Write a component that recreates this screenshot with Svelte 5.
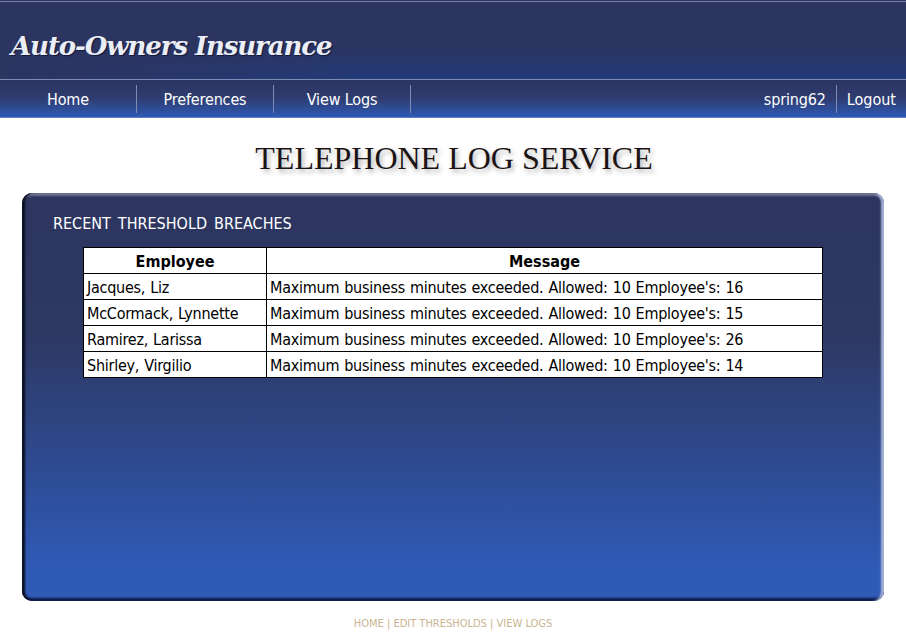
<script>
  const breaches = [
    { employee: 'Jacques, Liz', allowed: 10, actual: 16 },
    { employee: 'McCormack, Lynnette', allowed: 10, actual: 15 },
    { employee: 'Ramirez, Larissa', allowed: 10, actual: 26 },
    { employee: 'Shirley, Virgilio', allowed: 10, actual: 14 }
  ];
</script>

<div class="page">
  <header class="banner">
    <span class="logo">Auto-Owners Insurance</span>
  </header>

  <nav class="nav">
    <a class="nav-item" href="#home">Home</a>
    <a class="nav-item" href="#prefs">Preferences</a>
    <a class="nav-item" href="#logs">View Logs</a>
    <div class="nav-right">
      <span class="user">spring62</span>
      <a class="logout" href="#logout">Logout</a>
    </div>
  </nav>

  <h1 class="title">TELEPHONE LOG SERVICE</h1>

  <main class="panel">
    <h2 class="panel-title">RECENT THRESHOLD BREACHES</h2>
    <table class="breaches">
      <thead>
        <tr>
          <th class="col-employee">Employee</th>
          <th>Message</th>
        </tr>
      </thead>
      <tbody>
        {#each breaches as row}
          <tr>
            <td>{row.employee}</td>
            <td>Maximum business minutes exceeded. Allowed: {row.allowed} Employee's: {row.actual}</td>
          </tr>
        {/each}
      </tbody>
    </table>
  </main>

  <footer class="footer">
    <a href="#home">HOME</a> | <a href="#edit">EDIT THRESHOLDS</a> | <a href="#logs">VIEW LOGS</a>
  </footer>
</div>

<style>
  :global(body) {
    margin: 0;
    background: #fff;
  }

  .page {
    height: 638px;
    overflow: hidden;
    font-family: "DejaVu Sans", Verdana, sans-serif;
    font-stretch: condensed;
    font-size: 16px;
  }

  a {
    text-decoration: none;
    color: inherit;
  }

  .banner {
    box-sizing: border-box;
    height: 79px;
    padding: 0 0 16px 11px;
    display: flex;
    align-items: flex-end;
    border-top: 1px solid #2b3460;
    box-shadow: inset 0 1px 0 #7b80a0;
    background:
      linear-gradient(to right, #2c3460 0%, rgba(44, 52, 96, 0) 40%),
      linear-gradient(#2c3460 55%, #223a78 100%);
  }

  .logo {
    font-family: "DejaVu Serif", "Liberation Serif", serif;
    font-stretch: normal;
    font-weight: bold;
    font-style: italic;
    font-size: 26px;
    line-height: 34px;
    letter-spacing: -1.1px;
    color: #eceef6;
    text-shadow: 1px 1px 1px #10183a;
  }

  .nav {
    box-sizing: border-box;
    height: 39px;
    display: flex;
    align-items: center;
    border-top: 1px solid #7f8ab5;
    border-bottom: 1px solid #5f7ec4;
    color: #fff;
    background: linear-gradient(#2c3561 0%, #2e3c70 50%, #2f5ab5 100%);
  }

  .nav-item {
    box-sizing: border-box;
    width: 137px;
    height: 28px;
    line-height: 30px;
    letter-spacing: -0.15px;
    text-align: center;
    border-right: 1px solid #7f8ab5;
  }

  .nav-right {
    margin-left: auto;
    display: flex;
    align-items: center;
    padding-right: 10px;
  }

  .user {
    height: 28px;
    line-height: 30px;
    letter-spacing: -0.15px;
    padding-right: 10px;
    border-right: 1px solid #7f8ab5;
  }

  .logout {
    height: 28px;
    padding-left: 10px;
    line-height: 30px;
  }

  .title {
    margin: 22px 0 0;
    padding-left: 2px;
    height: 53px;
    font-family: "Liberation Serif", "Times New Roman", serif;
    font-stretch: normal;
    font-weight: normal;
    font-size: 32px;
    line-height: 36px;
    text-align: center;
    color: #1c1414;
    text-shadow: 2px 3px 5px #aaa;
  }

  .panel {
    box-sizing: border-box;
    height: 408px;
    margin: 0 22px;
    padding: 21px 61px 0;
    border-radius: 10px;
    color: #fff;
    background: linear-gradient(#2d3560 0%, #2d3863 35%, #2f5ab6 92%, #2f5ab6 100%);
    box-shadow:
      inset 4px 0 2px -1px #0c1024,
      inset -4px 0 2px -1px #a3b1d6,
      inset 0 4px 2px -1px #6f7290,
      inset 0 -4px 2px -1px #0c1c48;
  }

  .panel-title {
    margin: 0 0 14px -30px;
    font-size: 16px;
    font-weight: normal;
    line-height: 19px;
    word-spacing: 2.5px;
  }

  .breaches {
    width: 740px;
    border-collapse: collapse;
    table-layout: fixed;
    background: #fff;
    color: #000;
  }

  .breaches th,
  .breaches td {
    height: 23px;
    padding: 2px 3px 0;
    border: 1px solid #000;
    line-height: 23px;
    white-space: nowrap;
  }

  .breaches td {
    letter-spacing: -0.25px;
    word-spacing: 0.7px;
  }

  .col-employee {
    width: 176px;
  }

  .footer {
    margin-top: 15px;
    font-size: 11px;
    line-height: 16px;
    text-align: center;
    color: #c9b48f;
  }
</style>
